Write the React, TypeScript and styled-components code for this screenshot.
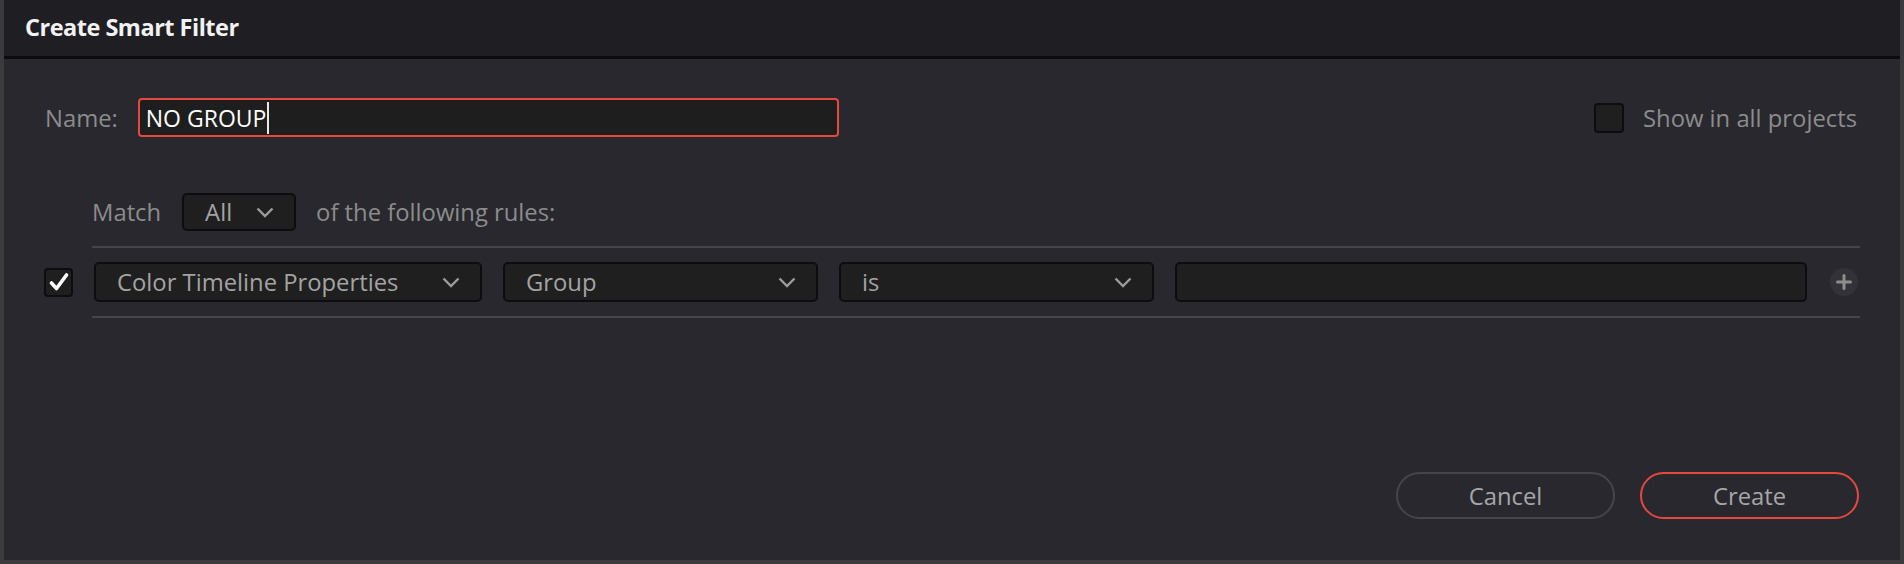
import styled, { createGlobalStyle } from "styled-components";

const GlobalStyle = createGlobalStyle`
  * { box-sizing: border-box; }
  html, body {
    margin: 0;
    padding: 0;
    background: #28282e;
    font-family: "Open Sans", "Noto Sans", sans-serif;
  }
`;

const Dialog = styled.div`
  width: 1904px;
  height: 564px;
  display: flex;
  flex-direction: column;
  background: #28282e;
  border: 4px solid #3a3a3f;
  border-top: none;
`;

const TitleBar = styled.div`
  height: 59px;
  flex-shrink: 0;
  display: flex;
  align-items: center;
  padding-left: 21px;
  padding-bottom: 3px;
  background: #1f1f23;
  border-bottom: 3px solid #0b0b0d;
`;

const Title = styled.h1`
  margin: 0;
  font-size: 23.5px;
  font-weight: 700;
  color: #f2f2f2;
  letter-spacing: -0.5px;
`;

const Body = styled.div`
  flex: 1;
  display: flex;
  flex-direction: column;
  padding: 39px 41px 41px 0;
`;

const NameRow = styled.div`
  display: flex;
  align-items: center;
  height: 39px;
  padding-left: 41px;
  padding-right: 2px;
`;

const Label = styled.span`
  font-size: 23.8px;
  color: #8c8c8c;
  white-space: nowrap;
`;

const NameField = styled.div`
  margin-left: 20px;
  width: 701px;
  height: 39px;
  display: flex;
  align-items: center;
  padding-left: 6px;
  background: #1e1e1f;
  border: 2px solid #e5493d;
  border-radius: 4px;
  font-size: 23px;
  color: #ffffff;
`;

const Caret = styled.span`
  display: inline-block;
  width: 2px;
  height: 32px;
  margin-left: 1px;
  background: #e8e8e8;
`;

const Spacer = styled.div`
  flex: 1;
`;

const CheckGroup = styled.label`
  display: flex;
  align-items: center;
  gap: 19px;
`;

const Box = styled.span<{ $size: number }>`
  width: ${(p) => p.$size}px;
  height: ${(p) => p.$size}px;
  flex-shrink: 0;
  display: flex;
  align-items: center;
  justify-content: center;
  background: #1f1f20;
  border: 2px solid #0d0d0e;
  border-radius: 4px;
`;

const MatchRow = styled.div`
  display: flex;
  align-items: center;
  margin-top: 56px;
  margin-left: 88px;
  height: 38px;
`;

const Select = styled.div<{ $width: number; $height: number }>`
  width: ${(p) => p.$width}px;
  height: ${(p) => p.$height}px;
  flex-shrink: 0;
  display: flex;
  align-items: center;
  justify-content: space-between;
  padding: 0 20px 0 21px;
  background: #1f1f20;
  border: 2px solid #0d0d0e;
  border-radius: 5px;
  font-size: 23.8px;
  color: #a3a3a3;
`;

const MatchSelect = styled(Select)`
  margin: 0 20px 0 21px;
`;

const Rules = styled.div`
  display: flex;
  flex-direction: column;
  margin-top: 15px;
  padding-left: 40px;
`;

const Rule = styled.div`
  height: 2px;
  margin-left: 48px;
  width: 1768px;
  background: #45464c;
`;

const RuleRow = styled.div`
  display: flex;
  align-items: center;
  height: 40px;
  margin: 14px 0;
  gap: 21px;
`;

const TextField = styled.div`
  width: 632px;
  height: 40px;
  flex-shrink: 0;
  background: #1f1f20;
  border: 2px solid #0d0d0e;
  border-radius: 5px;
`;

const AddButton = styled.button`
  width: 28px;
  height: 28px;
  margin-left: 2px;
  padding: 0;
  display: flex;
  align-items: center;
  justify-content: center;
  border: none;
  border-radius: 50%;
  background: #323238;
`;

const Footer = styled.div`
  margin-top: auto;
  display: flex;
  justify-content: flex-end;
  gap: 25px;
`;

const PillButton = styled.button<{ $primary?: boolean }>`
  width: 219px;
  height: 47px;
  border-radius: 24px;
  background: transparent;
  border: 2px solid ${(p) => (p.$primary ? "#e5493d" : "#45454b")};
  font-family: "Open Sans", "Noto Sans", sans-serif;
  font-size: 23.8px;
  color: #a6a6a6;
`;

const Chevron = () => (
  <svg width="18" height="11" viewBox="0 0 18 11">
    <polyline points="1.5,1.5 9,9 16.5,1.5" fill="none" stroke="#9c9c9c" strokeWidth="2.4" />
  </svg>
);

const CheckMark = () => (
  <svg width="20" height="20" viewBox="0 0 20 20">
    <path d="M2.5 11 L7.5 16.5 L17.5 3" fill="none" stroke="#ffffff" strokeWidth="3.6" strokeLinecap="round" strokeLinejoin="round" />
  </svg>
);

const Plus = () => (
  <svg width="16" height="16" viewBox="0 0 16 16">
    <path d="M8 1.5 V14.5 M1.5 8 H14.5" stroke="#8e8e8e" strokeWidth="3" strokeLinecap="round" />
  </svg>
);

function App() {
  return (
    <>
      <GlobalStyle />
      <Dialog>
        <TitleBar>
          <Title>Create Smart Filter</Title>
        </TitleBar>
        <Body>
          <NameRow>
            <Label>Name:</Label>
            <NameField>
              NO GROUP
              <Caret />
            </NameField>
            <Spacer />
            <CheckGroup>
              <Box $size={30} />
              <Label>Show in all projects</Label>
            </CheckGroup>
          </NameRow>

          <MatchRow>
            <Label>Match</Label>
            <MatchSelect $width={114} $height={38}>
              All
              <Chevron />
            </MatchSelect>
            <Label>of the following rules:</Label>
          </MatchRow>

          <Rules>
            <Rule />
            <RuleRow>
              <Box $size={29}>
                <CheckMark />
              </Box>
              <Select $width={388} $height={40}>
                Color Timeline Properties
                <Chevron />
              </Select>
              <Select $width={315} $height={40}>
                Group
                <Chevron />
              </Select>
              <Select $width={315} $height={40}>
                is
                <Chevron />
              </Select>
              <TextField />
              <AddButton>
                <Plus />
              </AddButton>
            </RuleRow>
            <Rule />
          </Rules>

          <Footer>
            <PillButton>Cancel</PillButton>
            <PillButton $primary>Create</PillButton>
          </Footer>
        </Body>
      </Dialog>
    </>
  );
}

export default App;
